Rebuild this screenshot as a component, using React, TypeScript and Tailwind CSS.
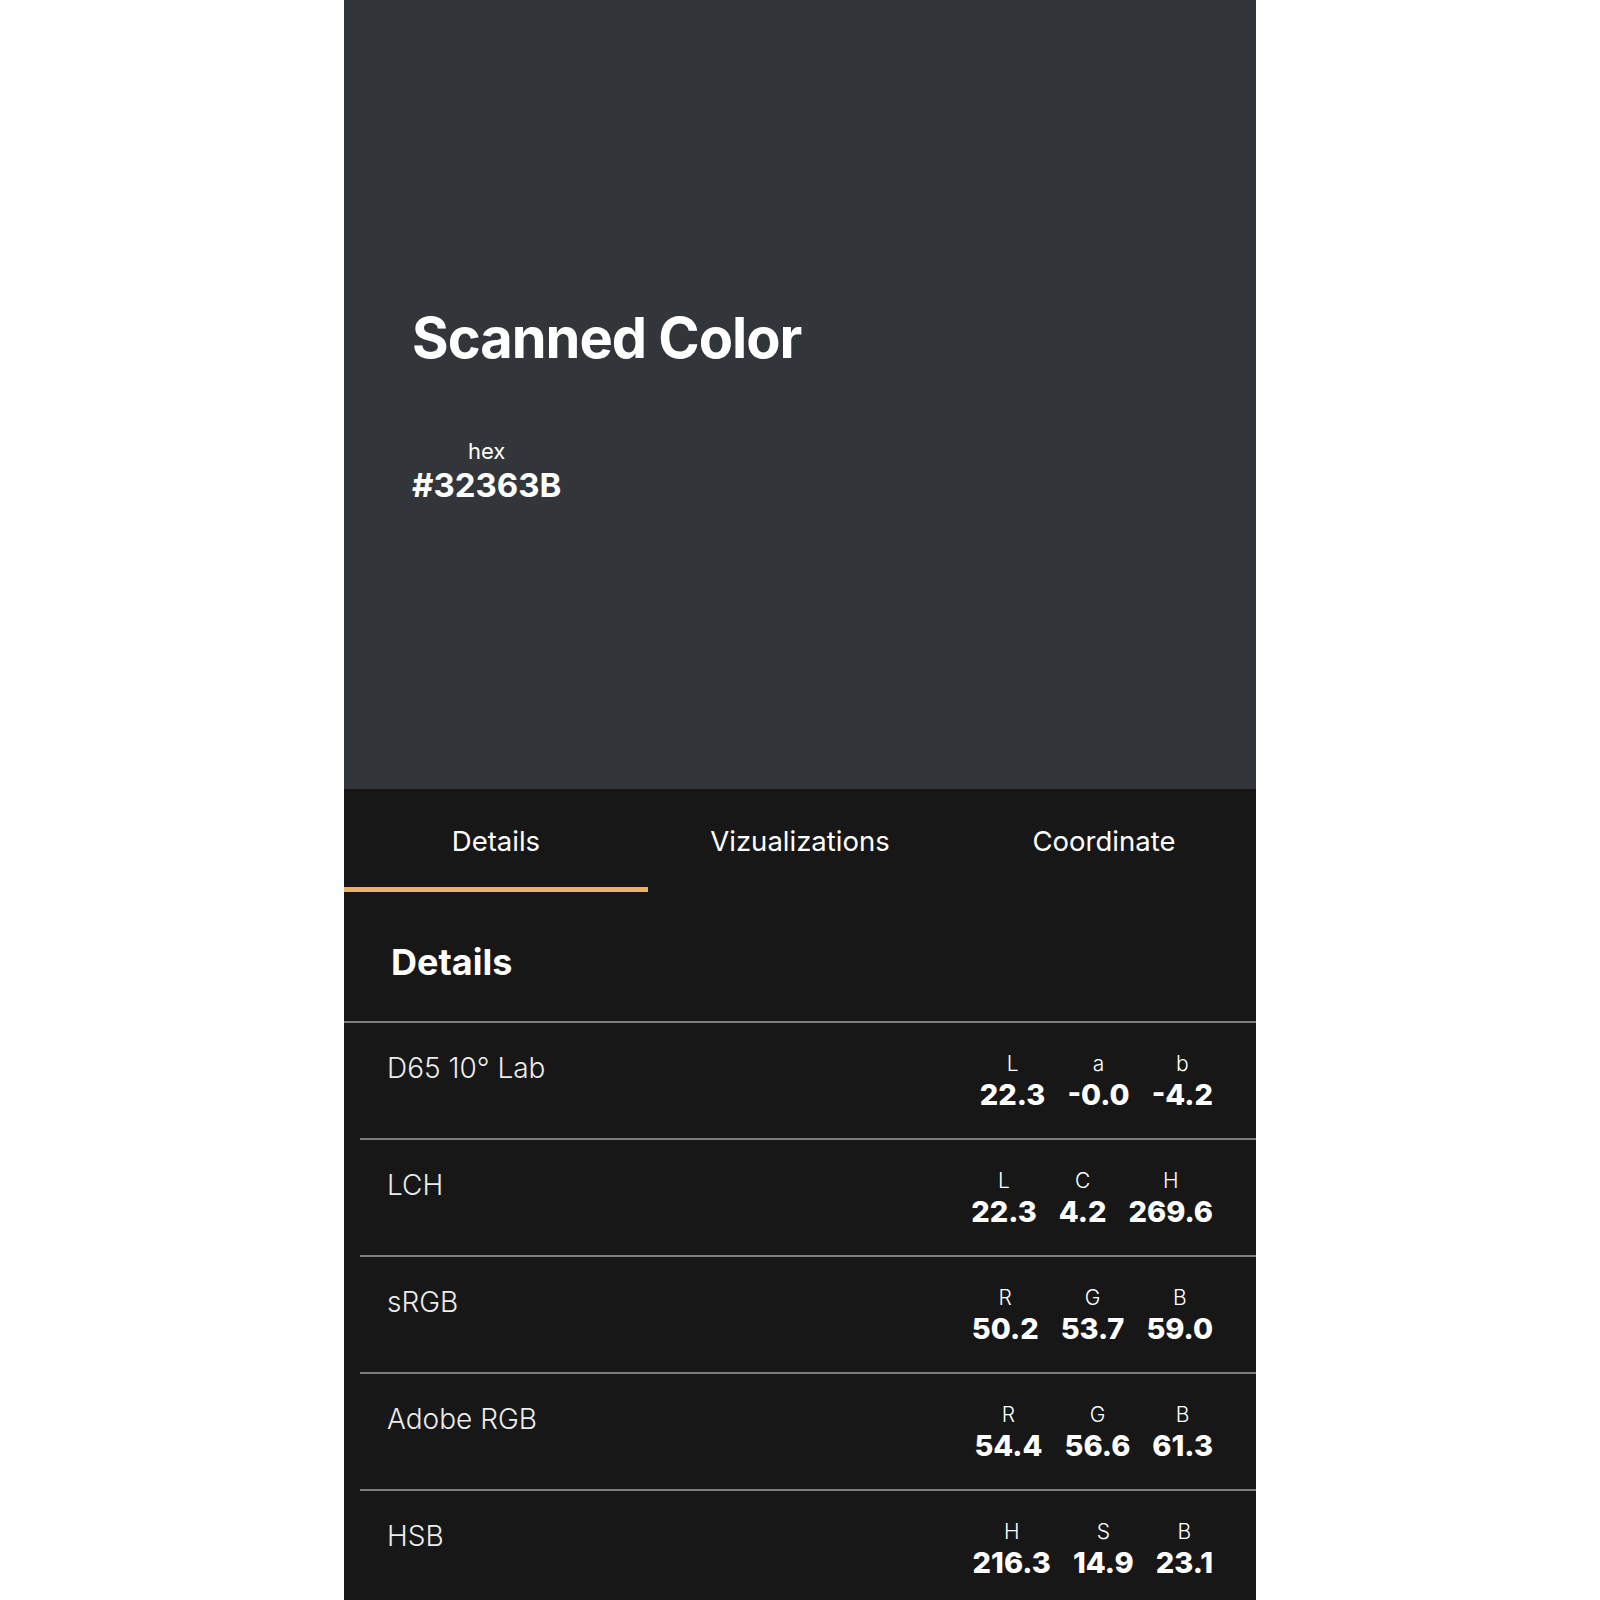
import { useState } from "react";

type Row = {
  name: string;
  values: { key: string; value: string }[];
};

const rows: Row[] = [
  {
    name: "D65 10° Lab",
    values: [
      { key: "L", value: "22.3" },
      { key: "a", value: "-0.0" },
      { key: "b", value: "-4.2" },
    ],
  },
  {
    name: "LCH",
    values: [
      { key: "L", value: "22.3" },
      { key: "C", value: "4.2" },
      { key: "H", value: "269.6" },
    ],
  },
  {
    name: "sRGB",
    values: [
      { key: "R", value: "50.2" },
      { key: "G", value: "53.7" },
      { key: "B", value: "59.0" },
    ],
  },
  {
    name: "Adobe RGB",
    values: [
      { key: "R", value: "54.4" },
      { key: "G", value: "56.6" },
      { key: "B", value: "61.3" },
    ],
  },
  {
    name: "HSB",
    values: [
      { key: "H", value: "216.3" },
      { key: "S", value: "14.9" },
      { key: "B", value: "23.1" },
    ],
  },
];

const tabs = ["Details", "Vizualizations", "Coordinate"];

export default function App() {
  const [active, setActive] = useState(0);

  return (
    <div
      className="min-h-[1600px] bg-white flex justify-center"
      style={{ fontFamily: "Inter, 'Noto Sans', sans-serif" }}
    >
      <div className="w-[912px] flex flex-col bg-[#171717]">
        {/* Color swatch header */}
        <section className="h-[789px] bg-[#32363B] pl-[68px] pt-[300px]">
          <h1 className="text-[56px] leading-[76px] font-bold text-white tracking-[-1px]">
            Scanned Color
          </h1>
          <div className="mt-[61px] inline-flex flex-col items-center">
            <span className="text-[22px] leading-[28px] text-white">hex</span>
            <span className="text-[33px] leading-[40px] font-bold text-white">
              #32363B
            </span>
          </div>
        </section>

        {/* Tabs */}
        <nav className="grid grid-cols-3 h-[103px]">
          {tabs.map((tab, i) => (
            <button
              key={tab}
              onClick={() => setActive(i)}
              className={
                "flex items-start justify-center pt-[35px] text-[27.5px] leading-[34px] text-white border-b-[5px] " +
                (active === i ? "border-[#E8B566]" : "border-transparent")
              }
            >
              {tab}
            </button>
          ))}
        </nav>

        {/* Details */}
        <div className="h-[131px] pl-[47px] pt-[49px] border-b-2 border-[#7d7d7d]">
          <h2 className="text-[36px] leading-[42px] font-bold text-white">Details</h2>
        </div>

        <div className="flex flex-col">
          {rows.map((row, i) => (
            <div
              key={row.name}
              className={
                "ml-4 flex justify-between items-start pl-[27px] pr-[43px] pt-[27px] " +
                (i > 0 ? "h-[117px] border-t-2 border-[#7d7d7d]" : "h-[115px]")
              }
            >
              <span className="text-[28px] leading-[34px] text-[#ececec] font-light mt-[1px]">
                {row.name}
              </span>
              <div className="flex gap-[22px]">
                {row.values.map((v) => (
                  <div key={v.key} className="flex flex-col items-center">
                    <span className="text-[21px] leading-[28px] text-white font-light">
                      {v.key}
                    </span>
                    <span className="text-[29px] leading-[34px] font-extrabold text-white">
                      {v.value}
                    </span>
                  </div>
                ))}
              </div>
            </div>
          ))}
        </div>
      </div>
    </div>
  );
}
